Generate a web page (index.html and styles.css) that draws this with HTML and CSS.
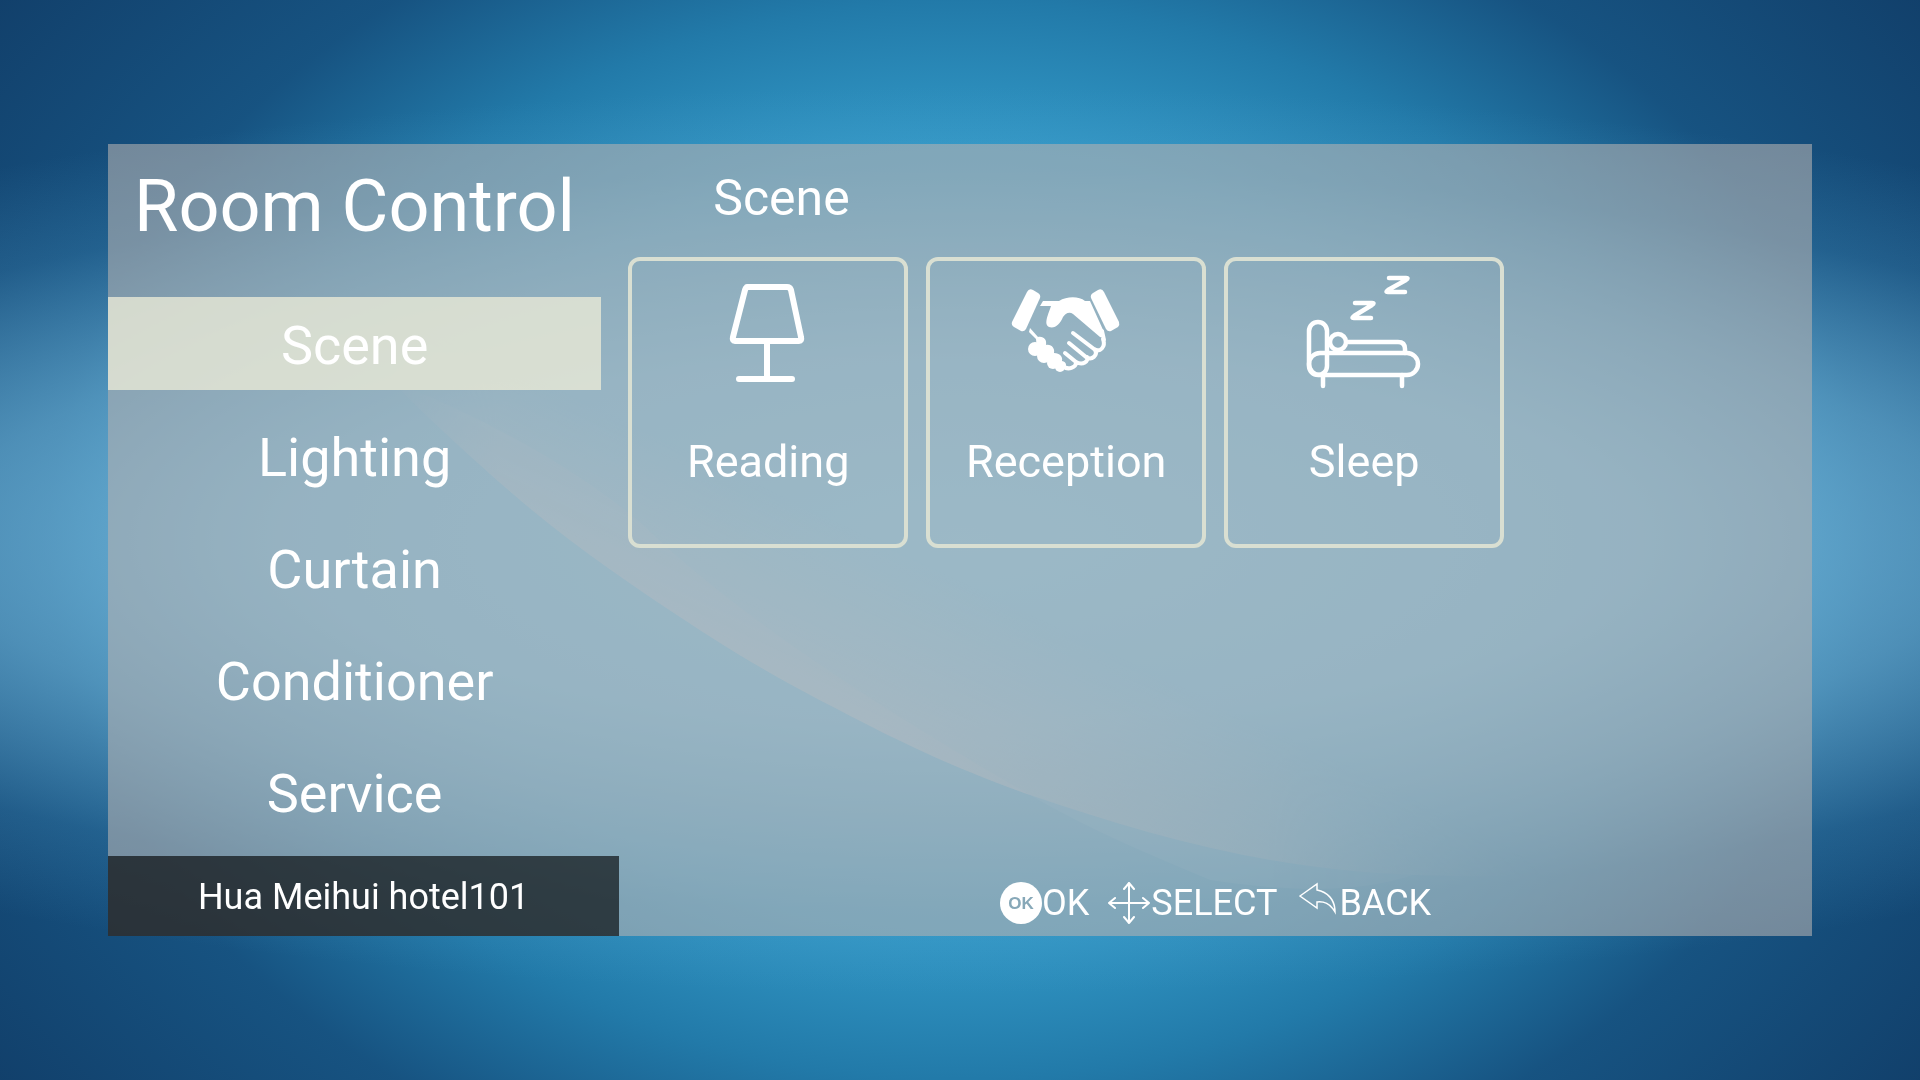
FILE: index.html
```html
<!doctype html>
<html lang="en">

<head>
  <meta charset="utf-8">
  <meta name="viewport" content="width=device-width, initial-scale=1">
  <title>Room Control</title>
  <link rel="stylesheet" href="styles.css">
</head>

<body>
  <svg class="backdrop" viewBox="0 0 1920 1080" preserveAspectRatio="none" aria-hidden="true">
    <defs>
      <linearGradient id="streak" gradientUnits="userSpaceOnUse" x1="839" y1="710" x2="912" y2="557">
        <stop offset="0" stop-color="#d6d2d6" stop-opacity=".3" />
        <stop offset="1" stop-color="#d6d2d6" stop-opacity="0" />
      </linearGradient>
      <linearGradient id="fade" x1="0" y1="0" x2="1" y2="0">
        <stop offset="0" stop-color="#fff" stop-opacity="0" />
        <stop offset=".1" stop-color="#fff" />
        <stop offset=".75" stop-color="#fff" />
        <stop offset="1" stop-color="#fff" stop-opacity="0" />
      </linearGradient>
      <mask id="ends" maskUnits="userSpaceOnUse" x="380" y="200" width="1180" height="720">
        <rect x="380" y="200" width="1180" height="720" fill="url(#fade)" />
      </mask>
    </defs>
    <g mask="url(#ends)">
      <path fill="url(#streak)" d="M390 380C440 430 490 475 533 511C580 550 636 588 686 621C736 654 780 680 839 710C905 745 960 770 1030 795C1150 836 1270 870 1413 875C1480 877 1520 876 1560 874V700L500 200z" />
      <path fill="#d6d2d6" fill-opacity=".08" d="M390 380C440 430 490 475 533 511C580 550 636 588 686 621C736 654 780 680 839 710C905 745 960 770 1030 795Q760 640 640 522Q540 440 390 380z" />
      <path fill="#e0f4fa" fill-opacity=".07" d="M1030 795C1090 830 1150 855 1210 880Q1340 900 1413 875C1270 870 1150 836 1030 795z" />
    </g>
  </svg>

  <main class="panel">
    <aside class="sidebar">
      <h1 class="sidebar__title">Room Control</h1>
      <nav class="menu">
        <a class="menu__item menu__item_active" href="#scene">Scene</a>
        <a class="menu__item" href="#lighting">Lighting</a>
        <a class="menu__item" href="#curtain">Curtain</a>
        <a class="menu__item" href="#conditioner">Conditioner</a>
        <a class="menu__item" href="#service">Service</a>
      </nav>
      <p class="sidebar__room">Hua Meihui hotel101</p>
    </aside>

    <section class="content" id="scene">
      <h2 class="content__title">Scene</h2>
      <div class="cards">
        <button class="card" type="button">
          <svg class="card__icon" viewBox="0 0 120 120" fill="none" stroke="#fff" stroke-width="6" stroke-linecap="round" stroke-linejoin="round" aria-hidden="true">
            <path d="M39 10H79Q82 10 83 13L93 60Q94 64 91 64H27Q24 64 25 60L37 13Q38 10 40 10M59 64V102M31 102H84" />
          </svg>
          <span class="card__name">Reading</span>
        </button>
        <button class="card" type="button">
          <svg class="card__icon" viewBox="0 0 120 120" aria-hidden="true">
            <g fill="#fff">
              <path d="M21 15Q23 11 27 13L32 16Q35 18 34 21L20 52Q18 55 15 54L8 50Q5 48 6 45z" />
              <path d="M98 15Q96 11 92 13L87 16Q84 18 85 21L100 52Q102 55 105 54L112 50Q114 48 113 45z" />
              <path d="M37 24H53C61 19 73 19 79 24H84L98 55C97 60 96 61 94 60L67 37C63 34 59 37 57 40C54 47 49 52 43 50C37 47 43 36 45 29H34z" />
              <circle cx="29" cy="72" r="7" />
              <circle cx="38" cy="79" r="7" />
              <circle cx="47" cy="86" r="6" />
              <circle cx="54" cy="90" r="5" />
              <path d="M24 51L32 60C38 59 41 63 40 68C46 67 49 72 48 76C54 76 57 80 56 84C61 85 61 89 58 92L47 88L31 73L30 62L23 55z" />
            </g>
            <path fill="none" stroke="#fff" stroke-width="4" stroke-linecap="round" stroke-linejoin="round" d="M67 56L88 72C94 76 100 70 97 62M63 66L80 80C86 84 92 78 89 73M59 76L70 85C77 89 83 84 81 80M57 89C62 94 70 90 70 86M96 54L98 63" />
          </svg>
          <span class="card__name">Reception</span>
        </button>
        <button class="card" type="button">
          <svg class="card__icon" viewBox="0 0 120 120" fill="none" stroke="#fff" stroke-width="4.5" stroke-linecap="round" stroke-linejoin="round" aria-hidden="true">
            <rect x="5" y="45" width="18" height="53" rx="9" />
            <rect x="5" y="76" width="109" height="22" rx="11" />
            <circle cx="34" cy="65" r="8" />
            <path d="M44 65H94Q101 65 101 72V76M19 98V109M98 98V109" />
            <path d="M51 26H68Q71 26 68 28L50 39Q47 41 50 41H67M85 1H102Q105 1 102 3L84 13Q81 15 84 15H101" />
          </svg>
          <span class="card__name">Sleep</span>
        </button>
      </div>
      <ul class="hints">
        <li class="hint">
          <span class="hint__ok">OK</span>OK
        </li>
        <li class="hint">
          <svg class="hint__icon" viewBox="0 0 44 44" fill="none" stroke="#fff" stroke-width="2" stroke-linecap="round" stroke-linejoin="round" aria-hidden="true">
            <path d="M2 22H42M22 2V42M8 17L2 22L8 27M36 17L42 22L36 27M17 8L22 2L27 8M17 36L22 42L27 36" />
          </svg>SELECT
        </li>
        <li class="hint">
          <svg class="hint__icon" viewBox="0 0 44 44" fill="none" stroke="#fff" stroke-width="1.5" aria-hidden="true">
            <path d="M5 15L22 3V9C32 11 40 18 40 31C36 24 30 20 22 21V27z" />
          </svg>BACK
        </li>
      </ul>
    </section>
  </main>
</body>

</html>
```
FILE: styles.css
```css
*,
*::before,
*::after {
  box-sizing: border-box;
}

body {
  margin: 0;
  min-height: 100vh;
  display: flex;
  padding: 144px 108px;
  font-family: Roboto, sans-serif;
  color: #fff;
  background-color: #113e69;
  background-image:
    radial-gradient(ellipse 88% 42% at 50% 50%, rgba(125, 198, 232, 0.9), rgba(120, 190, 226, 0.85) 40%, rgba(108, 177, 214, 0.65) 60%, rgba(80, 155, 200, 0.22) 82%, rgba(80, 155, 200, 0)),
    radial-gradient(ellipse 64% 86% at 50% 50%, #5cb8de 0%, #3298c6 42%, #227aa9 58%, rgba(24, 88, 135, 0.8) 74%, rgba(17, 62, 105, 0));
}

h1,
h2,
p,
ul {
  margin: 0;
  padding: 0;
  font-weight: 400;
}

.backdrop {
  position: fixed;
  top: 0;
  left: 0;
  width: 100%;
  height: 100%;
}

.panel {
  position: relative;
  flex: 1;
  display: flex;
  background-color: rgba(178, 176, 176, 0.6);
}

.sidebar {
  width: 30%;
  display: flex;
  flex-direction: column;
}

.sidebar__title {
  padding: 21px 18px 48px 0;
  font-size: 72px;
  line-height: 84px;
  text-align: center;
}

.menu {
  flex: 1;
  display: flex;
  flex-direction: column;
  gap: 19px;
  padding-right: 18px;
}

.menu__item {
  padding: 17px 0 12px;
  font-size: 54px;
  line-height: 64px;
  color: #fff;
  text-align: center;
  text-decoration: none;
}

.menu__item_active {
  background-color: rgba(234, 234, 215, 0.8);
}

.sidebar__room {
  padding-top: 2px;
  font-size: 36px;
  line-height: 78px;
  text-align: center;
  background-color: rgba(0, 0, 0, 0.63);
}

.content {
  flex: 1;
  display: flex;
  flex-direction: column;
  padding: 24px 9px 8px;
}

.content__title {
  padding-left: 85px;
  font-size: 50px;
  line-height: 60px;
}

.cards {
  flex: 1;
  display: flex;
  flex-wrap: wrap;
  align-content: flex-start;
  gap: 18px;
  padding-top: 29px;
}

.card {
  width: 280px;
  height: 291px;
  display: flex;
  flex-direction: column;
  align-items: center;
  padding: 16px 0 0;
  font-family: inherit;
  font-size: 45px;
  line-height: 60px;
  color: #fff;
  background: none;
  border: 4px solid #d9dfd2;
  border-radius: 12px;
  cursor: pointer;
}

.card__icon {
  width: 120px;
  height: 120px;
  overflow: visible;
}

.card__name {
  padding-top: 35px;
}

.hints {
  display: flex;
  justify-content: center;
  gap: 18px;
  list-style: none;
  font-size: 36px;
}

.hint {
  display: flex;
  align-items: center;
  line-height: 50px;
}

.hint__icon {
  width: 44px;
  height: 44px;
}

.hint__ok {
  width: 42px;
  height: 42px;
  font: bold 17px/44px "Liberation Sans", sans-serif;
  color: #87a8b8;
  text-align: center;
  background-color: #fff;
  border-radius: 50%;
}
```
